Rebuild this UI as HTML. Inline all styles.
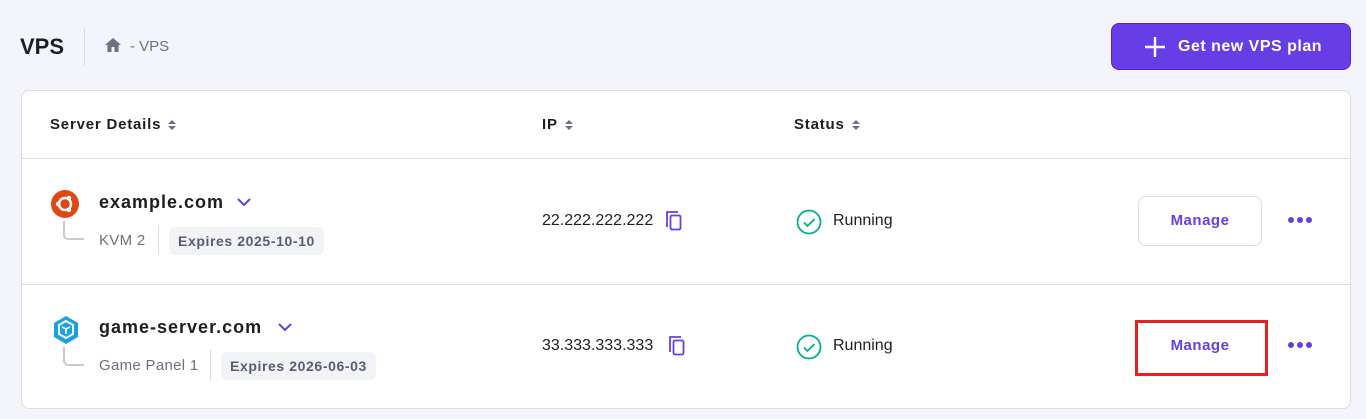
<!DOCTYPE html>
<html><head><style>
*{box-sizing:border-box;margin:0;padding:0}
body{width:1366px;height:419px;background:#f4f4fd;font-family:"Liberation Sans",sans-serif;position:relative;overflow:hidden;color:#1d1e20}
.abs{position:absolute}
.b{font-weight:bold}
.card{position:absolute;left:21px;top:90px;width:1330px;height:319px;background:#fff;border:1px solid #dadce0;border-radius:8px}
.hl{position:absolute;left:0;right:0;height:1px;background:#dadce0}
.th{position:absolute;top:25px;font-size:15px;font-weight:bold;color:#1d1e20;letter-spacing:.8px}
.sort{display:inline-block;margin-left:6px;vertical-align:middle}
.name{font-size:18px;font-weight:bold;letter-spacing:1px}
.sub{font-size:15px;color:#6d7081;letter-spacing:.3px}
.tag{position:absolute;background:#f2f3f6;border-radius:6px;font-size:14px;font-weight:bold;color:#595c6e;padding:6px 9px;letter-spacing:.6px}
.mg{position:absolute;width:124px;height:50px;border:1px solid #dadce0;border-radius:8px;color:#673de6;font-weight:bold;font-size:15px;text-align:center;line-height:48px;background:#fff;letter-spacing:.5px}
.dots{position:absolute;font-size:0}
.dots i{display:inline-block;width:6px;height:6px;border-radius:3px;background:#673de6;margin-right:3px}
</style></head><body>
<div class="abs b" style="left:20px;top:34px;font-size:22px">VPS</div>
<div class="abs" style="left:84px;top:28px;width:1px;height:38px;background:#dadce0"></div>
<svg class="abs" style="left:104px;top:37px" width="18" height="16" viewBox="0 0 18 16"><path d="M9 1L1 8h2.5v7h4v-5h3v5h4V8H17z" fill="#6d7081"/></svg>
<div class="abs" style="left:130px;top:38px;font-size:15px;color:#6d7081">- VPS</div>
<div class="abs" style="left:1111px;top:23px;width:240px;height:47px;background:#673de6;border:1px solid #5025d1;border-radius:8px;color:#fff;font-weight:bold;font-size:16px;line-height:45px;letter-spacing:.5px">
<svg class="abs" style="left:32px;top:12px" width="22" height="22"><path d="M11 1v20M1 11h20" stroke="#fff" stroke-width="2.4"/></svg>
<span style="position:absolute;left:66px">Get new VPS plan</span></div>
<div class="card">
<div class="th" style="left:28px">Server Details<svg class="sort" width="10" height="12"><path d="M1 5L5 1l4 4zM1 7l4 4 4-4z" fill="#6d7081"/></svg></div>
<div class="th" style="left:520px">IP<svg class="sort" width="10" height="12"><path d="M1 5L5 1l4 4zM1 7l4 4 4-4z" fill="#6d7081"/></svg></div>
<div class="th" style="left:772px">Status<svg class="sort" width="10" height="12"><path d="M1 5L5 1l4 4zM1 7l4 4 4-4z" fill="#6d7081"/></svg></div>
<div class="hl" style="top:67px"></div>
<div class="hl" style="top:193px"></div>

<!-- row1 -->
<svg class="abs" style="left:29px;top:99px" width="28" height="28"><circle cx="14" cy="14" r="14" fill="#dd4814"/><circle cx="14" cy="14" r="6" fill="none" stroke="#fff" stroke-width="2.5"/><circle cx="7" cy="14" r="2.2" fill="#fff"/><circle cx="18" cy="8" r="2.2" fill="#fff"/><circle cx="18" cy="20" r="2.2" fill="#fff"/></svg>
<svg class="abs" style="left:40px;top:130px" width="22" height="20"><path d="M2 0v14a4 4 0 0 0 4 4h16" fill="none" stroke="#c8cad3" stroke-width="2"/></svg>
<div class="abs name" style="left:77px;top:101px">example.com</div>
<svg class="abs" style="left:214px;top:106px" width="16" height="10"><path d="M2 2l6 6 6-6" fill="none" stroke="#673de6" stroke-width="2"/></svg>
<div class="abs sub" style="left:77px;top:141px">KVM 2</div>
<div class="abs" style="left:136px;top:134px;width:1px;height:30px;background:#dadce0"></div>
<div class="tag" style="left:147px;top:136px">Expires 2025-10-10</div>
<div class="abs" style="left:520px;top:121px;font-size:16px">22.222.222.222</div>
<svg class="abs" style="left:643px;top:119px" width="18" height="22"><path d="M2 17V2h11" fill="none" stroke="#673de6" stroke-width="1.8"/><rect x="5.5" y="5.5" width="10" height="14" rx="1.5" fill="none" stroke="#673de6" stroke-width="1.8"/></svg>
<svg class="abs" style="left:774px;top:118px" width="26" height="26"><circle cx="13" cy="13" r="11.5" fill="none" stroke="#00b090" stroke-width="1.8"/><path d="M8 13.5l3.5 3.5 7-7" fill="none" stroke="#00b090" stroke-width="1.8"/></svg>
<div class="abs" style="left:811px;top:121px;font-size:16px">Running</div>
<div class="mg" style="left:1116px;top:105px">Manage</div>
<div class="dots" style="left:1266px;top:126px"><i></i><i></i><i></i></div>

<!-- row2 -->
<svg class="abs" style="left:30px;top:224px" width="28" height="30" viewBox="0 0 28 30"><path d="M14 1l12 7v14l-12 7-12-7V8z" fill="#1ba0e2"/><path d="M14 6l7 4v9l-7 4-7-4v-9z" fill="none" stroke="#fff" stroke-width="2"/><path d="M10 12l4 2 4-2M14 14v5" fill="none" stroke="#fff" stroke-width="1.6"/></svg>
<svg class="abs" style="left:40px;top:256px" width="22" height="20"><path d="M2 0v14a4 4 0 0 0 4 4h16" fill="none" stroke="#c8cad3" stroke-width="2"/></svg>
<div class="abs name" style="left:77px;top:226px">game-server.com</div>
<svg class="abs" style="left:255px;top:231px" width="16" height="10"><path d="M2 2l6 6 6-6" fill="none" stroke="#673de6" stroke-width="2"/></svg>
<div class="abs sub" style="left:77px;top:266px">Game Panel 1</div>
<div class="abs" style="left:188px;top:259px;width:1px;height:30px;background:#dadce0"></div>
<div class="tag" style="left:199px;top:261px">Expires 2026-06-03</div>
<div class="abs" style="left:520px;top:246px;font-size:16px">33.333.333.333</div>
<svg class="abs" style="left:646px;top:244px" width="18" height="22"><path d="M2 17V2h11" fill="none" stroke="#673de6" stroke-width="1.8"/><rect x="5.5" y="5.5" width="10" height="14" rx="1.5" fill="none" stroke="#673de6" stroke-width="1.8"/></svg>
<svg class="abs" style="left:774px;top:243px" width="26" height="26"><circle cx="13" cy="13" r="11.5" fill="none" stroke="#00b090" stroke-width="1.8"/><path d="M8 13.5l3.5 3.5 7-7" fill="none" stroke="#00b090" stroke-width="1.8"/></svg>
<div class="abs" style="left:811px;top:246px;font-size:16px">Running</div>
<div class="mg" style="left:1116px;top:230px;border-color:#fff">Manage</div>
<div class="abs" style="left:1113px;top:229px;width:133px;height:56px;border:3px solid #e8201f"></div>
<div class="dots" style="left:1266px;top:251px"><i></i><i></i><i></i></div>
</div>
</body></html>
